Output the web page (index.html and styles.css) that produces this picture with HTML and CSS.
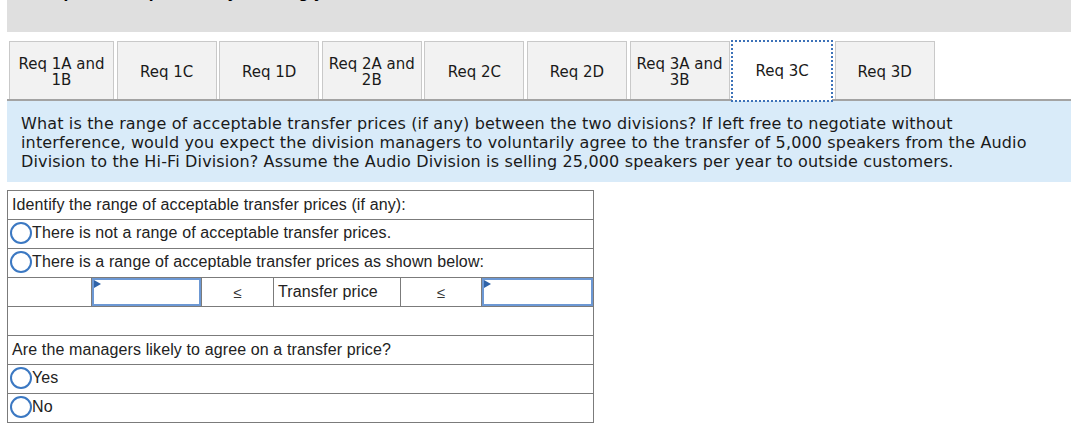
FILE: index.html
```html
<!DOCTYPE html>
<html>
<head>
<meta charset="utf-8">
<link rel="stylesheet" href="styles.css">
</head>
<body>
<div class="page">
  <div class="topbar"><p class="topbar-text">Complete this question by entering your answers in the tabs below.</p></div>
  <div class="tabs">
    <div class="tab tab-wide">Req 1A and<br>1B</div>
    <div class="tab">Req 1C</div>
    <div class="tab">Req 1D</div>
    <div class="tab">Req 2A and<br>2B</div>
    <div class="tab">Req 2C</div>
    <div class="tab">Req 2D</div>
    <div class="tab">Req 3A and<br>3B</div>
    <div class="tab tab-active">Req 3C</div>
    <div class="tab">Req 3D</div>
  </div>
  <div class="question">What is the range of acceptable transfer prices (if any) between the two divisions? If left free to negotiate without interference, would you expect the division managers to voluntarily agree to the transfer of 5,000 speakers from the Audio Division to the Hi-Fi Division? Assume the Audio Division is selling 25,000 speakers per year to outside customers.</div>
  <table class="answer">
    <colgroup>
      <col class="c1"><col class="c2"><col class="c3"><col class="c4"><col class="c5"><col class="c6">
    </colgroup>
    <tr><td colspan="6" class="label">Identify the range of acceptable transfer prices (if any):</td></tr>
    <tr><td colspan="6" class="opt"><span class="radio"></span>There is not a range of acceptable transfer prices.</td></tr>
    <tr><td colspan="6" class="opt"><span class="radio"></span>There is a range of acceptable transfer prices as shown below:</td></tr>
    <tr class="range">
      <td></td>
      <td class="inputcell"><div class="input"><span class="flag"></span></div></td>
      <td class="sym">≤</td>
      <td class="label">Transfer price</td>
      <td class="sym">≤</td>
      <td class="inputcell"><div class="input"><span class="flag"></span></div></td>
    </tr>
    <tr><td colspan="6"></td></tr>
    <tr><td colspan="6" class="label">Are the managers likely to agree on a transfer price?</td></tr>
    <tr><td colspan="6" class="opt"><span class="radio"></span>Yes</td></tr>
    <tr><td colspan="6" class="opt"><span class="radio"></span>No</td></tr>
  </table>
</div>
</body>
</html>
```

FILE: styles.css
```css
html, body {
  margin: 0;
  padding: 0;
  background: #ffffff;
}

.page {
  padding-left: 7px;
  width: 1064px;
}

.topbar {
  height: 32px;
  background: #dfdfdf;
  overflow: hidden;
}

.topbar-text {
  margin: -15px 0 0 0;
  padding-left: 22px;
  font-family: "DejaVu Sans", Verdana, sans-serif;
  font-weight: bold;
  font-size: 14px;
  line-height: 17px;
  color: #000;
}

.tabs {
  display: flex;
  gap: 2.6px;
  margin-top: 9px;
  padding-left: 2px;
  height: 58px;
  border-bottom: 2px solid #a3a3a3;
  box-sizing: content-box;
}

.tab {
  box-sizing: border-box;
  width: 100px;
  height: 58px;
  padding-top: 2px;
  background: #f2f2f2;
  border: 1px solid #c9c9c9;
  border-bottom: none;
  display: flex;
  align-items: center;
  justify-content: center;
  text-align: center;
  font-family: "DejaVu Sans", Verdana, sans-serif;
  font-size: 15px;
  line-height: 16px;
  color: #1a1a1a;
}

.tab-wide {
  width: 105px;
}

.tab-active {
  background: #ffffff;
  border: 1px solid #ffffff;
  outline: 2px dotted #3d72b8;
  outline-offset: -1px;
  height: 60px;
  padding-top: 0;
  position: relative;
  z-index: 1;
}

.question {
  background: #d9ebf9;
  padding: 13px 14px 11px 14px;
  font-family: "DejaVu Sans", Verdana, sans-serif;
  font-size: 16px;
  letter-spacing: 0.15px;
  line-height: 19px;
  color: #1a1a1a;
}

.answer {
  margin-top: 8px;
  width: 586px;
  border-collapse: collapse;
  table-layout: fixed;
  font-family: "Liberation Sans", Arial, sans-serif;
  font-size: 16px;
  letter-spacing: 0.12px;
  color: #222;
}

.c1 { width: 84px; }
.c2 { width: 110px; }
.c3 { width: 72px; }
.c4 { width: 127px; }
.c5 { width: 81px; }
.c6 { width: 112px; }

.answer td {
  border: 1px solid #7b7b7b;
  height: 28px;
  padding: 0;
  vertical-align: middle;
}

.answer td.label {
  padding-left: 4px;
}

.answer td.opt {
  padding-left: 2px;
}

.radio {
  display: inline-block;
  box-sizing: border-box;
  width: 22px;
  height: 22px;
  border: 2px solid #3b78c2;
  border-radius: 50%;
  vertical-align: middle;
  margin-top: -3px;
}

.answer td.sym {
  text-align: center;
  font-size: 15px;
  color: #333;
}

.answer td.inputcell {
  padding: 0;
}

.input {
  box-sizing: border-box;
  height: 28px;
  border: 2px solid #6c98d4;
  background: #fff;
  position: relative;
}

.flag {
  position: absolute;
  left: 0;
  top: 0;
  width: 0;
  height: 0;
  border-top: 4px solid transparent;
  border-bottom: 4px solid transparent;
  border-left: 7px solid #2f63a8;
}
```
